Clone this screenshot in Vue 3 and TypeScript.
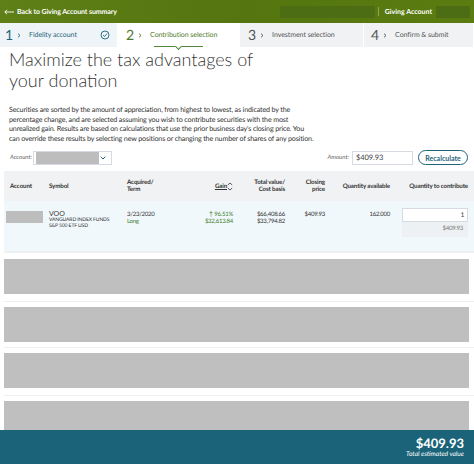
<script setup lang="ts">
const steps = [
  { num: '1', label: 'Fidelity account', state: 'done' },
  { num: '2', label: 'Contribution selection', state: 'active' },
  { num: '3', label: 'Investment selection', state: '' },
  { num: '4', label: 'Confirm & submit', state: '' },
]
const placeholders = ['w0', 'w1', 'w2', 'w3']
</script>

<template>
  <div class="page">
    <header class="topbar">
      <a class="back">
        <svg width="10" height="6" viewBox="0 0 10 6"><path d="M3 .8 .8 3 3 5.2M.8 3H10" fill="none" stroke="#fff" stroke-width=".9" /></svg>
        Back to Giving Account summary
      </a>
      <div class="top-right">
        <span class="mask mask-wide"></span>
        <span class="divider"></span>
        <span class="giving">Giving Account</span>
        <span class="mask mask-small"></span>
      </div>
    </header>

    <nav class="steps">
      <div v-for="s in steps" :key="s.num" class="step" :class="s.state">
        <span class="num">{{ s.num }}</span>
        <svg class="chev" width="4" height="5" viewBox="0 0 4 5"><path d="M1 .7 3 2.5 1 4.3" fill="none" stroke="currentColor" stroke-width=".9" /></svg>
        <span class="label">{{ s.label }}</span>
        <svg v-if="s.state === 'done'" class="check" width="10" height="10" viewBox="0 0 10 10">
          <circle cx="5" cy="5" r="4" fill="none" stroke="#1f6479" stroke-width=".9" />
          <path d="M3 5.1 4.5 6.5 7 3.6" fill="none" stroke="#1f6479" stroke-width=".9" />
        </svg>
      </div>
    </nav>

    <main class="content">
      <h1>Maximize the tax advantages of your donation</h1>
      <p class="intro">
        Securities are sorted by the amount of appreciation, from highest to lowest, as indicated by the<br />
        percentage change, and are selected assuming you wish to contribute securities with the most<br />
        unrealized gain. Results are based on calculations that use the prior business day's closing price. You<br />
        can override these results by selecting new positions or changing the number of shares of any position.
      </p>

      <div class="controls">
        <label class="ctl-label">Account:</label>
        <div class="select">
          <span class="select-mask"></span>
          <svg width="6" height="4" viewBox="0 0 6 4"><path d="M.7.8 3 3 5.3.8" fill="none" stroke="#1f6479" stroke-width="1" /></svg>
        </div>
        <label class="ctl-label amount-label">Amount:</label>
        <div class="amount">$409.93</div>
        <button class="recalc">Recalculate</button>
      </div>

      <div class="thead">
        <div class="c-acct">Account</div>
        <div class="c-sym">Symbol</div>
        <div class="c-acq">Acquired/<br />Term</div>
        <div class="c-gain"><u>Gain</u>
          <svg width="6" height="9" viewBox="0 0 6 9"><path d="M.8 3 3 1 5.2 3M.8 6 3 8 5.2 6" fill="none" stroke="#333" stroke-width=".8" /></svg>
        </div>
        <div class="c-total">Total value/<br />Cost basis</div>
        <div class="c-price">Closing<br />price</div>
        <div class="c-avail">Quantity available</div>
        <div class="c-qty">Quantity to contribute</div>
      </div>

      <div class="row">
        <div class="c-acct"><span class="acct-mask"></span></div>
        <div class="c-sym">
          <div class="ticker">VOO</div>
          <div class="fund">VANGUARD INDEX FUNDS<br />S&amp;P 500 ETF USD</div>
        </div>
        <div class="c-acq">3/23/2020<br /><span class="green">Long</span></div>
        <div class="c-gain">
          <span class="green">↑ 96.51%<br />$32,613.84</span>
        </div>
        <div class="c-total">$66,408.66<br />$33,794.82</div>
        <div class="c-price">$409.93</div>
        <div class="c-avail">162.000</div>
        <div class="c-qty qty-cell">
          <div class="qty-input">1</div>
          <div class="qty-value">$409.93</div>
        </div>
      </div>

      <div v-for="w in placeholders" :key="w" class="block-wrap" :class="w">
        <div class="block"></div>
      </div>
    </main>

    <footer class="total">
      <div class="total-val">$409.93</div>
      <div class="total-label">Total estimated value</div>
    </footer>
  </div>
</template>

<style>
body {
  margin: 0;
  background: #fff;
}
</style>

<style scoped>
.page {
  width: 474px;
  height: 464px;
  display: flex;
  flex-direction: column;
  overflow: hidden;
  font-family: Lato, "Liberation Sans", sans-serif;
  color: #333;
  text-rendering: geometricPrecision;
}
.topbar {
  flex: none;
  height: 23px;
  display: flex;
  align-items: center;
  justify-content: space-between;
  padding: 0 4px 0 4px;
  background: linear-gradient(90deg, #5f7f18, #54750f 50%, #5a7c10);
  color: #fff;
  font-size: 7px;
  font-weight: 700;
}
.back {
  display: flex;
  align-items: center;
  gap: 3px;
  letter-spacing: -0.1px;
}
.top-right {
  display: flex;
  align-items: center;
}
.mask {
  display: block;
  height: 12px;
  background: #4d6d14;
}
.mask-wide {
  width: 95px;
}
.mask-small {
  width: 34px;
  margin-left: 4px;
}
.divider {
  width: 1px;
  height: 9px;
  margin: 0 6px 0 3px;
  background: #8ba35a;
}
.steps {
  flex: none;
  height: 24px;
  display: flex;
  background: #f0f2f4;
}
.step {
  position: relative;
  flex: none;
  display: flex;
  align-items: center;
  padding-left: 5px;
  font-size: 7px;
  letter-spacing: -0.05px;
  color: #555;
  border-right: 1px solid #fff;
  box-sizing: border-box;
}
.step:nth-child(1) {
  width: 118px;
  background: #eef4f8;
  color: #1f6479;
}
.step:nth-child(2) {
  width: 122px;
  padding-left: 8px;
  background: #fff;
  color: #4f7a2a;
}
.step:nth-child(3) {
  width: 124px;
  padding-left: 8px;
}
.step:nth-child(4) {
  flex: 1;
  padding-left: 7px;
}
.num {
  font-size: 14px;
  line-height: 1;
  margin-right: 4px;
}
.chev {
  margin-right: 8px;
}
.check {
  position: absolute;
  left: 100px;
  top: 7px;
}
.active::after {
  content: "";
  position: absolute;
  left: 36px;
  bottom: 0;
  width: 49px;
  height: 1.5px;
  background: #4f8a3a;
}
.active::before {
  content: "";
  position: absolute;
  left: 58px;
  bottom: -2px;
  width: 4px;
  height: 4px;
  background: #fff;
  border-right: 1px solid #4f8a3a;
  border-bottom: 1px solid #4f8a3a;
  transform: rotate(45deg);
  z-index: 1;
}
.content {
  flex: 1;
  min-height: 0;
  overflow: hidden;
}
h1 {
  margin: 0;
  padding: 2px 9px 0;
  width: 270px;
  font-size: 18px;
  line-height: 21px;
  font-weight: 300;
  color: #333;
}
.intro {
  margin: 14px 9px 0;
  white-space: nowrap;
  font-size: 7.15px;
  letter-spacing: -0.15px;
  line-height: 9.6px;
  color: #333;
}
.controls {
  display: flex;
  align-items: center;
  height: 15px;
  margin-top: 7px;
  padding: 0 6px 0 10px;
  font-size: 6px;
}
.ctl-label {
  color: #666;
  font-style: italic;
  margin-right: 3px;
}
.select {
  width: 79px;
  height: 14px;
  margin-left: -2px;
  display: flex;
  align-items: center;
  justify-content: space-between;
  box-sizing: border-box;
  padding: 1px 5px 1px 2px;
  border: 1px solid #d5dbe0;
  background: #fff;
}
.select-mask {
  display: block;
  width: 63px;
  height: 12px;
  background: #bdbdbd;
}
.amount-label {
  margin-left: auto;
}
.amount {
  width: 61px;
  height: 14px;
  box-sizing: border-box;
  padding: 0 3px;
  line-height: 12px;
  margin-right: 5px;
  border: 1px solid #d5dbe0;
  font-size: 7.5px;
  letter-spacing: -0.1px;
  color: #444;
}
.recalc {
  width: 50px;
  height: 15px;
  padding: 0;
  border: 1px solid #1f6479;
  border-radius: 8px;
  background: #fff;
  color: #1f6479;
  font: 700 7px Lato, "Liberation Sans", sans-serif;
}
.thead,
.row {
  display: grid;
  grid-template-columns: 39px 78px 56px 50px 52px 40px 65px 78px;
  margin-left: 4px;
  padding-left: 6px;
  padding-right: 6px;
  line-height: 7px;
}
.thead {
  height: 30px;
  margin-top: 6px;
  align-items: center;
  background: #f1f2f4;
  font-size: 6.2px;
  letter-spacing: -0.14px;
  font-weight: 700;
  color: #333;
}
.row {
  height: 52px;
  box-sizing: border-box;
  padding-top: 10px;
  background: #f1f8fc;
  border-bottom: 2px solid #eef1f3;
  font-size: 6px;
  letter-spacing: -0.25px;
}
.c-gain,
.c-total,
.c-price,
.c-avail,
.c-qty {
  text-align: right;
  white-space: nowrap;
}
.c-gain svg {
  vertical-align: middle;
}
.acct-mask {
  display: block;
  width: 37px;
  height: 12px;
  margin-left: -4px;
  background: #bdbdbd;
}
.ticker {
  font-size: 7px;
  letter-spacing: 0;
  line-height: 6px;
}
.fund {
  font-size: 5px;
  letter-spacing: -0.1px;
  line-height: 6px;
  white-space: nowrap;
}
.green {
  color: #3f7f2d;
}
.qty-cell {
  margin-top: -3px;
}
.qty-input {
  height: 14px;
  box-sizing: border-box;
  margin-left: 12px;
  padding-right: 3px;
  background: #fff;
  border: 1px solid #d5dbe0;
  line-height: 12px;
  font-size: 6.6px;
}
.qty-value {
  height: 15px;
  margin-left: 12px;
  padding-right: 5px;
  line-height: 14px;
  background: #eef1f3;
  color: #777;
}
.block-wrap {
  margin-left: 4px;
  padding: 5px 0 5px;
  border-bottom: 1px solid #efefef;
}
.w0 {
  padding: 6px 0 7px;
}
.w1 {
  padding-bottom: 5px;
}
.w2 {
  padding-bottom: 7px;
}
.block {
  height: 35px;
  margin-right: 5px;
  background: #bfbfbf;
}
.total {
  flex: none;
  height: 34px;
  box-sizing: border-box;
  padding: 6px 10px 0 0;
  background: #1a6378;
  color: #fff;
  text-align: right;
}
.total-val {
  font-size: 13px;
  font-weight: 700;
  line-height: 14px;
}
.total-label {
  font-size: 6.6px;
  font-style: italic;
  line-height: 8px;
}
</style>
